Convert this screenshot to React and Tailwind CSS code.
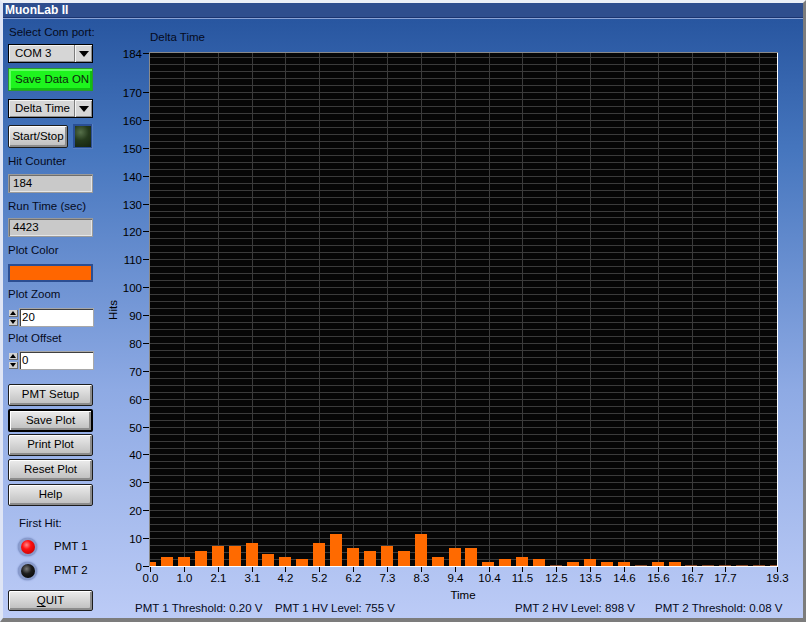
import React from "react";

const FONT = '"Liberation Sans", Arial, sans-serif';

// bar heights in pixels, one bar every ~16.9px
const BARS = [4, 9, 9, 15, 20, 20, 23, 12, 9, 7, 23, 32, 18, 15, 20, 15, 32, 9, 18, 18, 4, 7, 9, 7, 1, 4, 7, 4, 4, 1, 4, 4, 1, 1, 1, 1, 1, 1];

const X_LABELS = ["0.0", "1.0", "2.1", "3.1", "4.2", "5.2", "6.2", "7.3", "8.3", "9.4", "10.4", "11.5", "12.5", "13.5", "14.6", "15.6", "16.7", "17.7"];
const Y_LABELS = [184, 170, 160, 150, 140, 130, 120, 110, 100, 90, 80, 70, 60, 50, 40, 30, 20, 10, 0];

const PX0 = 150;
const PX1 = 778;
const PY0 = 53;
const PY1 = 566;
const yOf = (v) => PY1 - (v * (PY1 - PY0)) / 184;

function Chart() {
  const hLines = [];
  for (let i = 1; i <= 73; i++) hLines.push(Math.round(yOf(i * 2.5)) + 0.5);
  const vLines = [];
  for (let k = 1; k <= 18; k++) vLines.push(Math.round(PX0 + 33.85 * k) + 0.5);

  return (
    <svg width="703" height="557" viewBox="100 44 703 557" className="block shrink-0" style={{ fontFamily: FONT }}>
      <rect x={PX0} y={PY0} width={PX1 - PX0} height={PY1 - PY0} fill="#060606" />
      {hLines.map((y, i) => (
        <line key={"h" + i} x1={PX0} x2={PX1} y1={y} y2={y} stroke="#3b3b3b" strokeWidth="1" />
      ))}
      {vLines.map((x, i) => (
        <line key={"v" + i} x1={x} x2={x} y1={PY0} y2={PY1} stroke="#3b3b3b" strokeWidth="1" />
      ))}
      {BARS.map((h, k) => {
        const c = PX0 + 16.92 * k;
        const l = Math.max(PX0, Math.round(c - 6));
        const r = Math.min(PX1 - 1, Math.round(c + 6));
        return (
          <rect
            key={"b" + k}
            x={l}
            y={PY1 - h}
            width={r - l}
            height={h}
            fill={h > 1 ? "#ff6a00" : "#8a4a2a"}
          />
        );
      })}
      {/* sunken frame */}
      <line x1={PX0 - 0.5} x2={PX0 - 0.5} y1={PY0} y2={PY1} stroke="#8a8a8a" />
      <line x1={PX0 - 1} x2={PX1} y1={PY0 - 0.5} y2={PY0 - 0.5} stroke="#8a8a8a" />
      <line x1={PX1 - 0.5} x2={PX1 - 0.5} y1={PY0} y2={PY1 + 1} stroke="#ffffff" />
      <line x1={PX0} x2={PX1} y1={PY1 + 0.5} y2={PY1 + 0.5} stroke="#ffffff" />

      {Y_LABELS.map((v) => {
        const y = Math.round(yOf(v)) + 0.5;
        return (
          <g key={"y" + v}>
            <line x1={143} x2={149} y1={y} y2={y} stroke="#000" />
            <text x={142} y={y + 4.5} textAnchor="end" fontSize="11.5" fill="#000">
              {v}
            </text>
          </g>
        );
      })}
      {X_LABELS.map((t, k) => {
        const x = Math.round(PX0 + 33.85 * k) + 0.5;
        return (
          <g key={"x" + k}>
            <line x1={x} x2={x} y1={PY1 + 1} y2={PY1 + 6} stroke="#000" />
            <text x={x} y={582} textAnchor="middle" fontSize="11.5" fill="#000">
              {t}
            </text>
          </g>
        );
      })}
      <line x1={777.5} x2={777.5} y1={PY1 + 1} y2={PY1 + 6} stroke="#000" />
      <text x={777.5} y={582} textAnchor="middle" fontSize="11.5" fill="#000">
        19.3
      </text>
      <text x={463} y={599} textAnchor="middle" fontSize="11.5" fill="#000">
        Time
      </text>
      <text x={0} y={0} transform="translate(117 310) rotate(-90)" textAnchor="middle" fontSize="11.5" fill="#000">
        Hits
      </text>
    </svg>
  );
}

function Button({ children, focused = false, size = "w-[85px] h-[22px]", className = "" }) {
  return (
    <div
      className={`flex items-center justify-center ${size} rounded-[2px] bg-[linear-gradient(180deg,#ececec_0%,#d2d2d2_55%,#bdbdbd_100%)] shadow-[inset_1px_1px_0_#ffffff,inset_-2px_-2px_0_#8c8c8c] text-[11.5px] text-black whitespace-nowrap ${
        focused ? "border-2 border-black" : "border border-[#1c1c1c]"
      } ${className}`}
    >
      {children}
    </div>
  );
}

function Dropdown({ label, className = "" }) {
  return (
    <div className={`flex w-[85px] h-[19px] border border-black bg-[#d6d6d6] shadow-[inset_1px_1px_0_#f4f4f4,inset_-1px_-1px_0_#8c8c8c] ${className}`}>
      <div className="flex-1 flex items-center pl-[6px] text-[11.5px] text-black whitespace-nowrap">{label}</div>
      <div className="w-[18px] flex items-center justify-center border-l border-[#7c7c7c] shadow-[inset_1px_0_0_#f4f4f4]">
        <div className="w-0 h-0 border-l-[5px] border-r-[5px] border-t-[6px] border-l-transparent border-r-transparent border-t-black" />
      </div>
    </div>
  );
}

function Display({ value, className = "" }) {
  return (
    <div className={`w-[85px] h-[19px] flex items-center pl-[4px] bg-[#c9c9c9] border border-[#9a9a9a] shadow-[inset_1px_1px_0_#6e6e6e,inset_-1px_-1px_0_#e6e6e6] text-[11.5px] text-black ${className}`}>
      {value}
    </div>
  );
}

function Spinner({ value, className = "" }) {
  return (
    <div className={`flex items-center h-[19px] ${className}`}>
      <div className="w-[10px] h-[19px] flex flex-col items-center justify-center gap-[2px]">
        <div className="w-[9px] h-[7px] bg-[#d2d2d2] flex items-center justify-center shadow-[inset_-1px_-1px_0_#6c6c6c]">
          <div className="w-0 h-0 border-l-[3px] border-r-[3px] border-b-[4px] border-l-transparent border-r-transparent border-b-black" />
        </div>
        <div className="w-[9px] h-[7px] bg-[#d2d2d2] flex items-center justify-center shadow-[inset_-1px_-1px_0_#6c6c6c]">
          <div className="w-0 h-0 border-l-[3px] border-r-[3px] border-t-[4px] border-l-transparent border-r-transparent border-t-black" />
        </div>
      </div>
      <div className="ml-[1px] w-[75px] h-[19px] flex items-center pl-[2px] bg-white border border-[#a8a8a8] shadow-[inset_1px_1px_0_#404040] text-[11.5px] text-black">
        {value}
      </div>
    </div>
  );
}

function Label({ children, className = "" }) {
  return <div className={`h-[14px] leading-[14px] text-[11.5px] text-[#050a1c] whitespace-nowrap ${className}`}>{children}</div>;
}

function Led({ color }) {
  const fill =
    color === "red"
      ? "bg-[radial-gradient(circle_at_40%_35%,#ff8a8a_0%,#ff1010_35%,#b00000_100%)]"
      : "bg-[radial-gradient(circle_at_40%_35%,#7a7a7a_0%,#1c1c1c_40%,#000000_100%)]";
  return (
    <div className="w-[19px] h-[18px] rounded-full bg-[#8a9ccc] flex items-center justify-center shadow-[0_0_2px_#5a6ea8]">
      <div className={`w-[14px] h-[14px] rounded-full ${fill}`} />
    </div>
  );
}

export default function App() {
  return (
    <div
      className="w-[806px] h-[622px] flex flex-col border-t-[3px] border-l-[3px] border-r-[3px] border-b-[4px] border-t-[#eceff6] border-l-[#dfe5f5] border-r-[#7c7c7c] border-b-[#7c7c7c] overflow-hidden"
      style={{ fontFamily: FONT }}
    >
      {/* Title bar */}
      <div className="h-[15px] shrink-0 flex items-center pl-[2px] bg-[#2f4e8e] border-b border-[#1b3470]">
        <span className="text-[12px] font-bold text-white leading-none">MuonLab II</span>
      </div>
      <div className="h-[1px] shrink-0 bg-[#8aa2d6]" />

      <div className="flex-1 flex bg-[linear-gradient(180deg,#2856a0_0%,#4676be_22%,#8eaae4_62%,#bccbf6_100%)]">
        {/* Left control panel */}
        <div className="w-[97px] shrink-0 flex flex-col pl-[5px]">
          <Label className="mt-[6px] ml-[1px]">Select Com port:</Label>
          <Dropdown label="COM 3" className="mt-[5px]" />
          <div className="mt-[5px] w-[85px] h-[23px] flex items-center pl-[6px] bg-[#1ef51e] border border-[#2a9a2a] shadow-[inset_2px_2px_0_#63ff63,inset_-2px_-2px_0_#10c010] text-[11.5px] text-[#0c2a0c] whitespace-nowrap">
            Save Data ON
          </div>
          <Dropdown label="Delta Time" className="mt-[8px]" />
          <div className="mt-[6px] flex items-center h-[25px]">
            <Button size="w-[60px] h-[23px]">Start/Stop</Button>
            <div className="ml-[5px] w-[20px] h-[25px] bg-[#2a4f95] p-[2px] shadow-[inset_-1px_-1px_0_#5a7ec0]">
              <div className="w-full h-full bg-[radial-gradient(circle_at_35%_30%,#56704a_0%,#253a1c_45%,#142210_100%)]" />
            </div>
          </div>
          <Label className="mt-[5px]">Hit Counter</Label>
          <Display value="184" className="mt-[6px]" />
          <Label className="mt-[6px]">Run Time (sec)</Label>
          <Display value="4423" className="mt-[5px]" />
          <Label className="mt-[6px]">Plot Color</Label>
          <div className="mt-[7px] w-[85px] h-[18px] bg-[#2c4e92] p-[2px]">
            <div className="w-full h-full bg-[#ff6600]" />
          </div>
          <Label className="mt-[5px]">Plot Zoom</Label>
          <Spinner value="20" className="mt-[7px]" />
          <Label className="mt-[4px]">Plot Offset</Label>
          <Spinner value="0" className="mt-[6px]" />

          <Button className="mt-[14px]">PMT Setup</Button>
          <Button focused size="w-[85px] h-[23px]" className="mt-[3px]">Save Plot</Button>
          <Button className="mt-[2px]">Print Plot</Button>
          <Button className="mt-[3px]">Reset Plot</Button>
          <Button className="mt-[3px]">Help</Button>

          <Label className="mt-[10px] ml-[11px]">First Hit:</Label>
          <div className="mt-[8px] ml-[10px] flex items-center h-[18px]">
            <Led color="red" />
            <span className="ml-[17px] text-[11.5px] text-black">PMT 1</span>
          </div>
          <div className="mt-[6px] ml-[10px] flex items-center h-[18px]">
            <Led color="black" />
            <span className="ml-[17px] text-[11.5px] text-black">PMT 2</span>
          </div>
          <Button size="w-[85px] h-[21px]" className="mt-[10px]">
            <span className="underline underline-offset-2">Q</span>UIT
          </Button>
        </div>

        {/* Plot area */}
        <div className="flex-1 flex flex-col">
          <div className="mt-[11px] h-[14px] leading-[14px] pl-[50px] text-[11.5px] text-[#050a1c]">Delta Time</div>
          <Chart />
          <div className="h-[14px] leading-[14px] flex text-[11.5px] text-[#050a1c] pl-[35px] whitespace-nowrap">
            <span className="w-[140px]">PMT 1 Threshold: 0.20 V</span>
            <span className="w-[240px]">PMT 1 HV Level: 755 V</span>
            <span className="w-[140px]">PMT 2 HV Level: 898 V</span>
            <span>PMT 2 Threshold: 0.08 V</span>
          </div>
        </div>
      </div>
    </div>
  );
}
